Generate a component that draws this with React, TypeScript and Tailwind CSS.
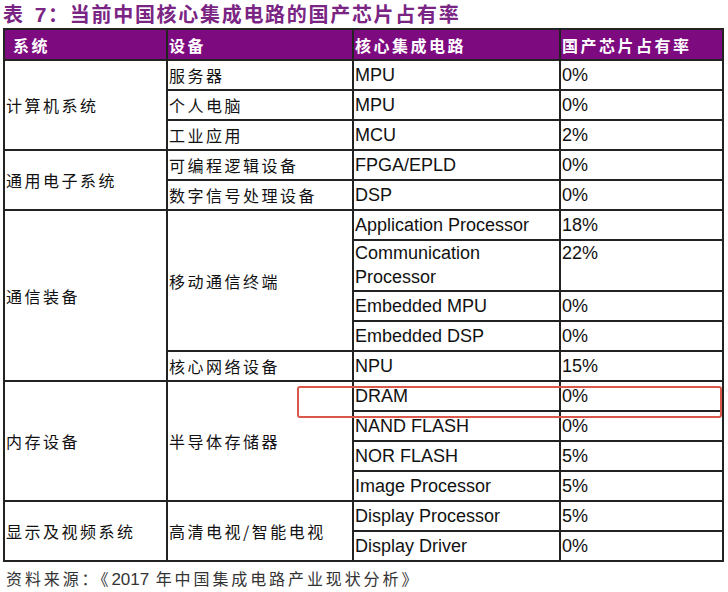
type Span = { t: string; span: number };
type Row = { sys?: Span; dev?: Span; chip: string[]; pct: string; tall?: boolean };

const rows: Row[] = [
  { sys: { t: "计算机系统", span: 3 }, dev: { t: "服务器", span: 1 }, chip: ["MPU"], pct: "0%" },
  { dev: { t: "个人电脑", span: 1 }, chip: ["MPU"], pct: "0%" },
  { dev: { t: "工业应用", span: 1 }, chip: ["MCU"], pct: "2%" },
  { sys: { t: "通用电子系统", span: 2 }, dev: { t: "可编程逻辑设备", span: 1 }, chip: ["FPGA/EPLD"], pct: "0%" },
  { dev: { t: "数字信号处理设备", span: 1 }, chip: ["DSP"], pct: "0%" },
  { sys: { t: "通信装备", span: 5 }, dev: { t: "移动通信终端", span: 4 }, chip: ["Application Processor"], pct: "18%" },
  { chip: ["Communication", "Processor"], pct: "22%", tall: true },
  { chip: ["Embedded MPU"], pct: "0%" },
  { chip: ["Embedded DSP"], pct: "0%" },
  { dev: { t: "核心网络设备", span: 1 }, chip: ["NPU"], pct: "15%" },
  { sys: { t: "内存设备", span: 4 }, dev: { t: "半导体存储器", span: 4 }, chip: ["DRAM"], pct: "0%" },
  { chip: ["NAND FLASH"], pct: "0%" },
  { chip: ["NOR FLASH"], pct: "5%" },
  { chip: ["Image Processor"], pct: "5%" },
  { sys: { t: "显示及视频系统", span: 2 }, dev: { t: "高清电视/智能电视", span: 2 }, chip: ["Display Processor"], pct: "5%" },
  { chip: ["Display Driver"], pct: "0%" },
];

const cjk = "font-['Noto_Sans_CJK_SC',sans-serif]";
const latin = "font-['Liberation_Sans','Noto_Sans_CJK_SC',sans-serif]";
const cell = "border-2 border-[#222] p-0 pl-[1px] align-middle";

export default function App() {
  return (
    <div className="relative w-[728px] h-[592px] bg-white overflow-hidden">
      <div className={`h-[28px] pl-[3px] pt-[1px] leading-[26px] text-[20px] font-bold tracking-[1.7px] text-[#7a2483] ${cjk}`}>
        表<span className={`${latin} ml-[10px] text-[21px]`}>7</span>：当前中国核心集成电路的国产芯片占有率
      </div>

      <table className="ml-[3px] w-[719px] table-fixed border-collapse">
        <colgroup>
          <col className="w-[163px]" />
          <col className="w-[186px]" />
          <col className="w-[207px]" />
          <col className="w-[163px]" />
        </colgroup>
        <thead>
          <tr className={`h-[31px] bg-[#7d0a7f] text-white text-[16px] font-bold tracking-[2.5px] ${cjk}`}>
            <th className={`${cell} text-left font-bold pl-[8px]`}>系统</th>
            <th className={`${cell} text-left font-bold`}>设备</th>
            <th className={`${cell} text-left font-bold`}>核心集成电路</th>
            <th className={`${cell} text-left font-bold`}>国产芯片占有率</th>
          </tr>
        </thead>
        <tbody className="text-[#111]">
          {rows.map((r, i) => (
            <tr key={i} className={r.tall ? "h-[51px]" : "h-[30px]"}>
              {r.sys && (
                <td rowSpan={r.sys.span} className={`${cell} text-[16px] tracking-[2.5px] ${cjk}`}>
                  {r.sys.t}
                </td>
              )}
              {r.dev && (
                <td rowSpan={r.dev.span} className={`${cell} text-[16px] tracking-[2.5px] ${cjk}`}>
                  {r.dev.t}
                </td>
              )}
              <td className={`${cell} text-[18px] leading-[24px] ${latin} ${r.tall ? "align-top" : ""}`}>
                {r.chip.map((c, j) => (
                  <div key={j}>{c}</div>
                ))}
              </td>
              <td className={`${cell} text-[18px] leading-[24px] ${latin} ${r.tall ? "align-top" : ""}`}>{r.pct}</td>
            </tr>
          ))}
        </tbody>
      </table>

      <div className={`mt-[4px] pl-[6px] text-[16px] tracking-[2.9px] text-[#333] ${cjk}`}>
        资料来源：《<span className={`${latin} text-[17px] tracking-normal`}>2017</span> 年中国集成电路产业现状分析》
      </div>

      {/* highlight box around the DRAM row */}
      <div className="absolute left-[297px] top-[386px] w-[425px] h-[32px] rounded-[3px] border-2 border-[#d9574b]" />
    </div>
  );
}
